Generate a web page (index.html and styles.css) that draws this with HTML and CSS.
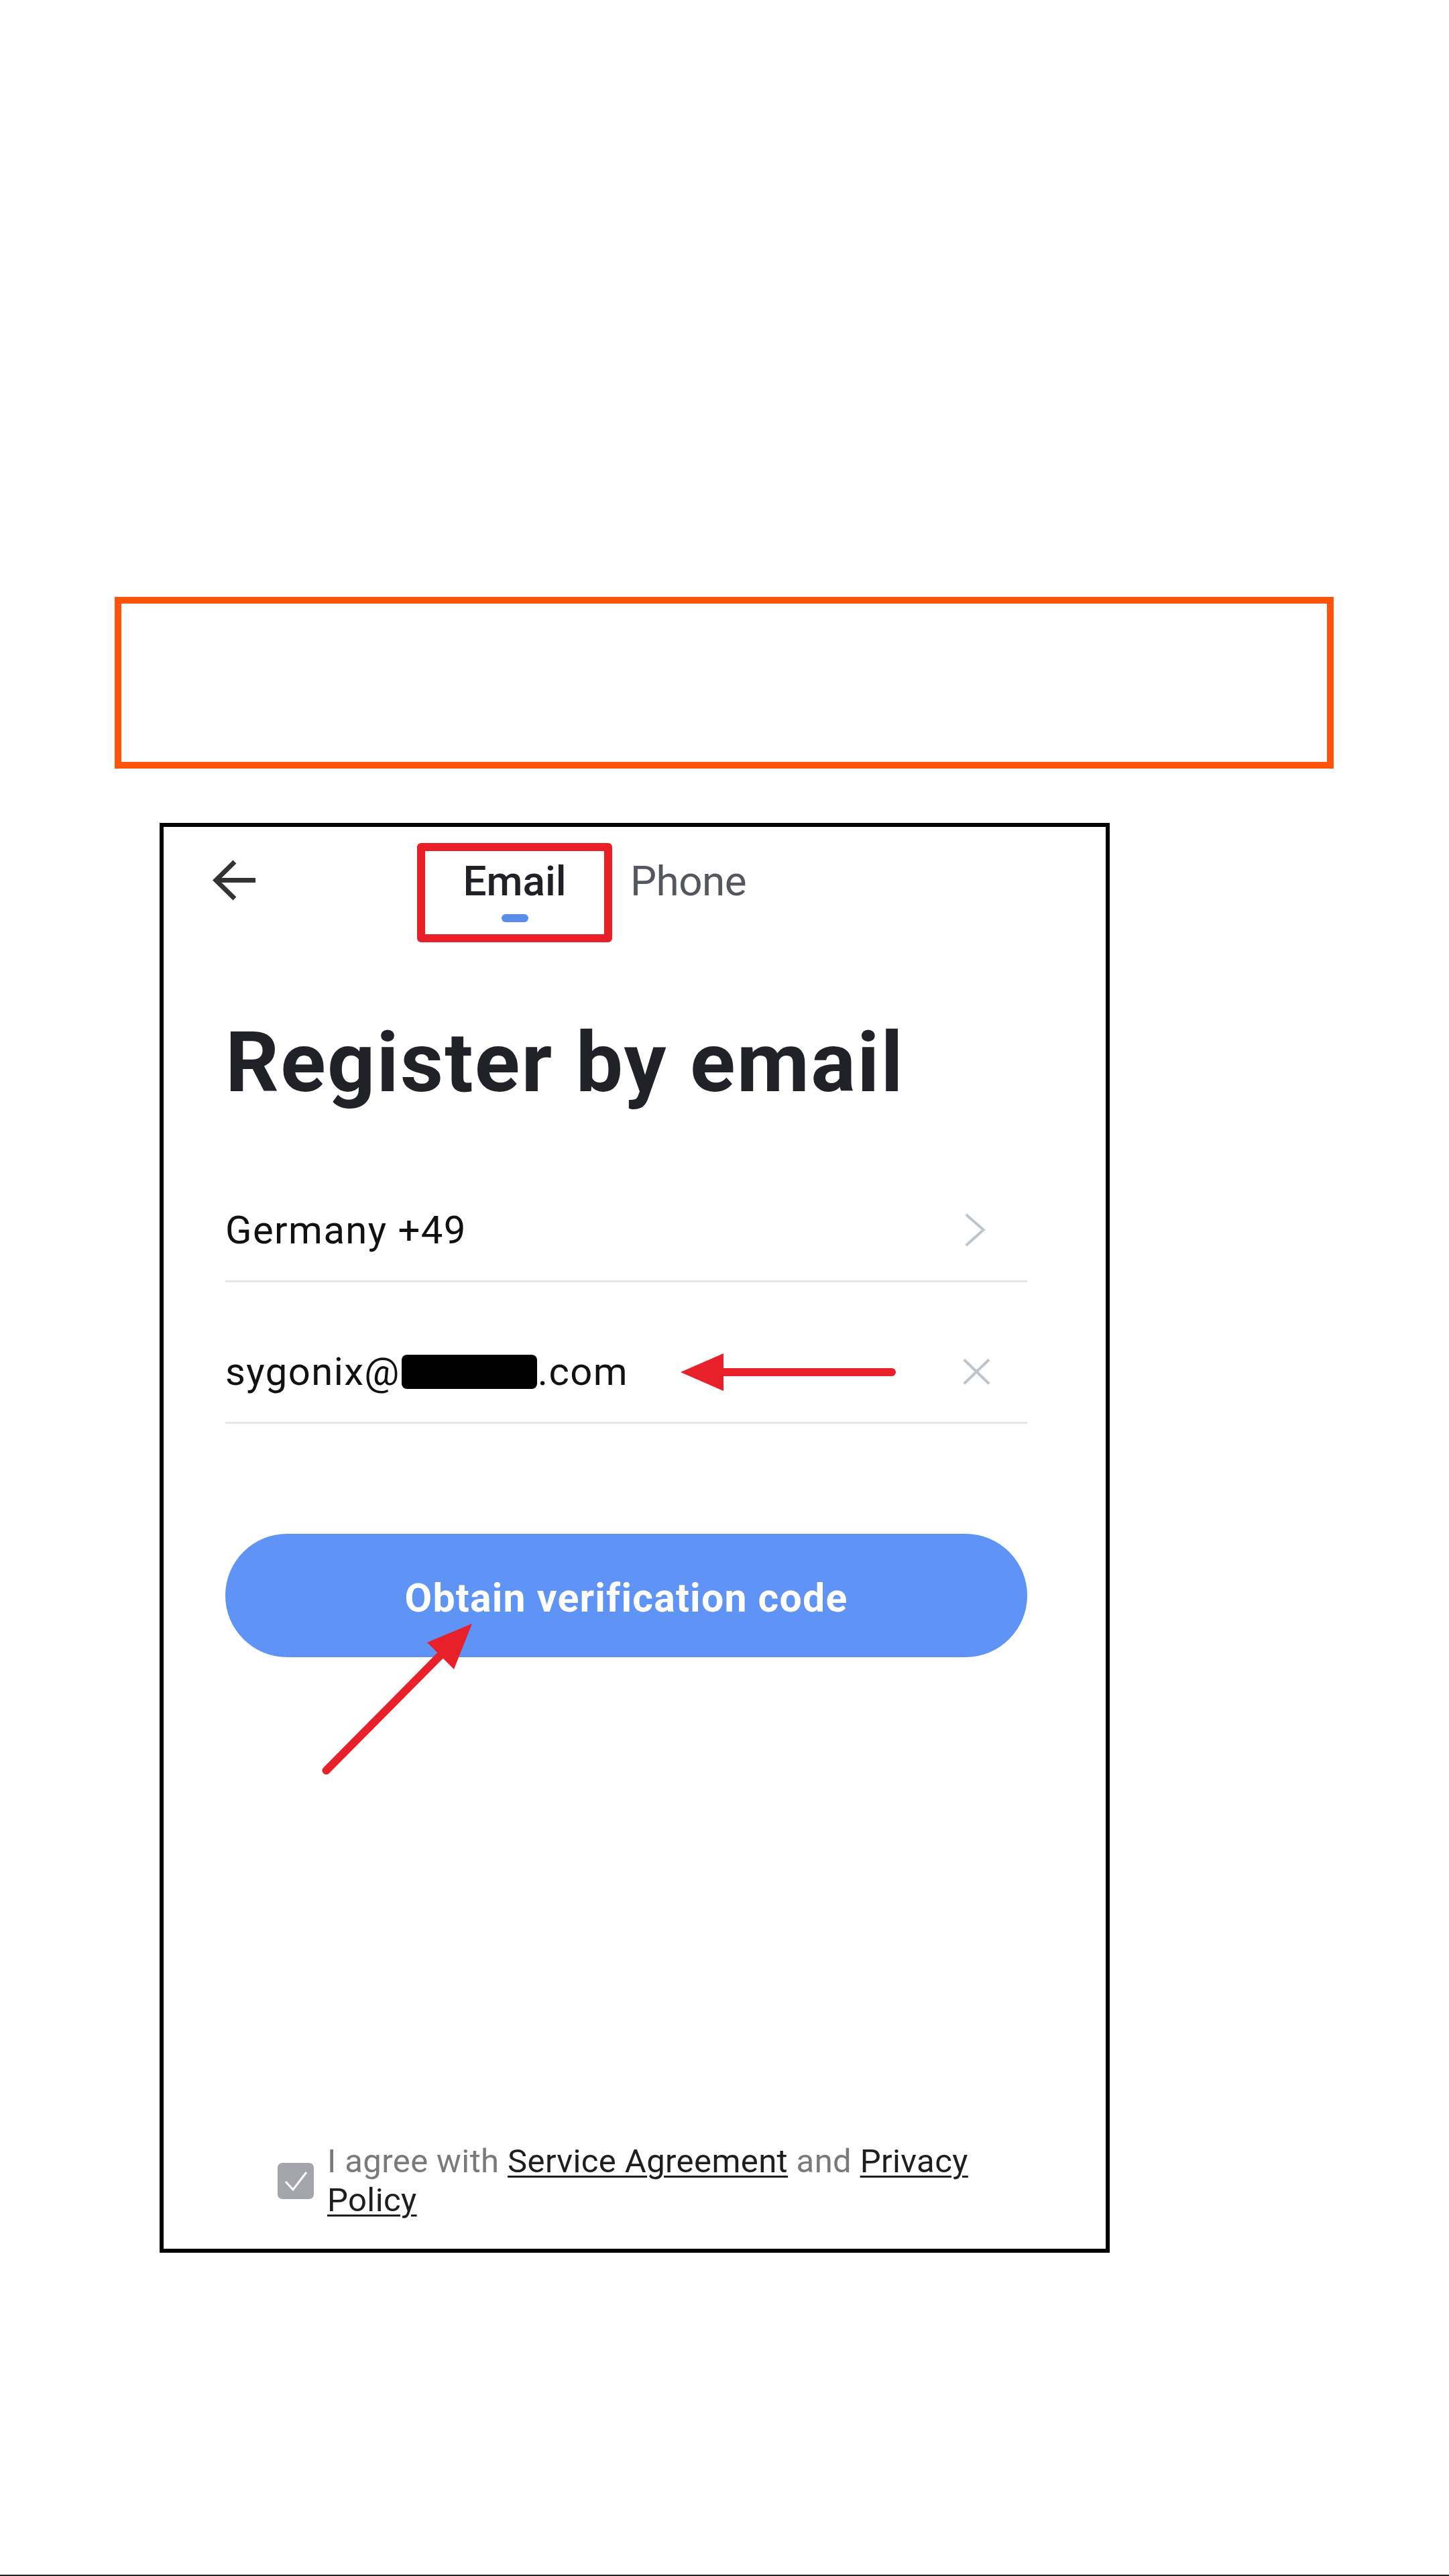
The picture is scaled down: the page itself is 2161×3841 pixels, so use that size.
FILE: index.html
```html
<!DOCTYPE html>
<html lang="en">
<head>
<meta charset="utf-8">
<title>Register by email</title>
<link rel="stylesheet" href="styles.css">
</head>
<body>
<div class="page">
  <div class="callout"></div>
  <div class="phone">
    <div class="header">
      <svg class="back" viewBox="0 0 68 66" width="68" height="66">
        <path d="M34 5 L6 32.5 L34 60 M6 32.5 H65" fill="none" stroke="#333333" stroke-width="7" stroke-linejoin="miter"/>
      </svg>
      <div class="tab-mark">
        <div class="tab tab-active">Email</div>
        <div class="tab-indicator"></div>
      </div>
      <div class="tab tab-other">Phone</div>
    </div>
    <h1 class="title">Register by email</h1>
    <div class="field field-first">
      <span class="field-text">Germany +49</span>
      <svg class="chevron" viewBox="0 0 32 52" width="32" height="52">
        <path d="M2.7 3 L28.7 25.7 L2.7 49" fill="none" stroke="#C0C5CB" stroke-width="4"/>
      </svg>
    </div>
    <div class="field">
      <span class="field-text">sygonix@<span class="redact"></span>.com</span>
      <svg class="clear" viewBox="0 0 43 43" width="43" height="43">
        <path d="M2.7 3.3 L40 39.3 M40 3.3 L2.7 39.3" fill="none" stroke="#C0C5CB" stroke-width="4"/>
      </svg>
    </div>
    <div class="cta">Obtain verification code</div>
    <div class="agree">
      <span class="checkbox">
        <svg viewBox="0 0 54 54" width="54" height="54">
          <path d="M12 28 L23 40 L43 14" fill="none" stroke="#ffffff" stroke-width="3"/>
        </svg>
      </span>
      <p class="agree-text">I agree with <a class="link">Service Agreement</a> and <a class="link">Privacy</a> <a class="link">Policy</a></p>
    </div>
    <svg class="anno anno-left" viewBox="0 0 330 64" width="330" height="64">
      <path d="M60 32 H320" stroke="#E8202A" stroke-width="12" stroke-linecap="round"/>
      <polygon points="5,32 69,4 69,60" fill="#E8202A"/>
    </svg>
    <svg class="anno anno-diag" viewBox="0 0 240 240" width="240" height="240">
      <path d="M11.5 230 L185 55" stroke="#E8202A" stroke-width="12" stroke-linecap="round"/>
      <polygon points="229,11 162,39 202,79" fill="#E8202A"/>
    </svg>
  </div>
  <div class="bottom-rule"></div>
</div>
</body>
</html>
```

FILE: styles.css
```css
* { box-sizing: border-box; }
html, body { margin: 0; padding: 0; background: #ffffff; }
body { font-family: Roboto, "Noto Sans", "Liberation Sans", sans-serif; }

.page {
  width: 2161px;
  height: 3841px;
  display: flex;
  flex-direction: column;
  padding-top: 890px;
  overflow: hidden;
}

.callout {
  flex: none;
  margin-left: 171px;
  width: 1818px;
  height: 256px;
  border: 10px solid #FF520A;
}

.phone {
  flex: none;
  position: relative;
  margin-left: 238px;
  margin-top: 81px;
  width: 1417px;
  height: 2132px;
  border: 6px solid #000000;
  display: flex;
  flex-direction: column;
  padding: 24px 0 43px 0;
  background: #ffffff;
}

.header {
  display: flex;
  align-items: flex-start;
  height: 148px;
}

.back {
  flex: none;
  margin-left: 72px;
  margin-top: 23px;
}

.tab-mark {
  flex: none;
  margin-left: 238px;
  width: 291px;
  height: 148px;
  border: 12px solid #E91E27;
  border-radius: 6px;
  display: flex;
  flex-direction: column;
  align-items: center;
  padding-top: 14px;
}

.tab {
  font-size: 62px;
  line-height: 62px;
  white-space: nowrap;
}

.tab-active {
  font-weight: 500;
  color: #1F2127;
}

.tab-indicator {
  width: 40px;
  height: 12px;
  border-radius: 6px;
  background: #5B8DEF;
  margin-top: 18px;
}

.tab-other {
  margin-left: 27px;
  margin-top: 26px;
  color: #54585E;
  letter-spacing: -0.5px;
}

.title {
  margin: 117px 117px 0 92px;
  font-size: 125px;
  line-height: 125px;
  font-weight: 700;
  color: #202228;
  white-space: nowrap;
  letter-spacing: 2.2px;
}

.field {
  margin: 0 117px 0 92px;
  display: flex;
  align-items: center;
  padding-top: 104px;
  padding-bottom: 46px;
  border-bottom: 3px solid #E6E6E6;
}

.field-first {
  margin-top: 54px;
}

.field-text {
  flex: 1;
  font-size: 58px;
  line-height: 58px;
  color: #111111;
  white-space: nowrap;
  letter-spacing: 1.4px;
}

.redact {
  display: inline-block;
  width: 202px;
  height: 51px;
  background: #000000;
  border-radius: 8px;
  vertical-align: -6px;
  margin: 0 1px 0 2px;
}

.chevron {
  flex: none;
  margin-right: 62px;
}

.clear {
  flex: none;
  margin-right: 54px;
}

.cta {
  margin: 164px 117px 0 92px;
  height: 184px;
  border-radius: 92px;
  background: #5F93F5;
  color: #ffffff;
  font-size: 59px;
  line-height: 59px;
  font-weight: 700;
  display: flex;
  align-items: center;
  justify-content: center;
  padding-top: 6px;
  letter-spacing: 1.2px;
}

.agree {
  margin-top: auto;
  margin-left: 170px;
  display: flex;
  align-items: center;
}

.checkbox {
  flex: none;
  width: 54px;
  height: 54px;
  border-radius: 7px;
  background: #A4A4AC;
  display: flex;
}

.agree-text {
  margin: 0 0 0 20px;
  width: 1040px;
  font-size: 49px;
  line-height: 58px;
  color: #7A7A7A;
  letter-spacing: 0.4px;
}

.link {
  color: #1E1E1E;
  text-decoration: underline;
  text-decoration-thickness: 3px;
  text-underline-offset: 5px;
}

.anno {
  position: absolute;
}

.anno-left {
  left: 766px;
  top: 781px;
}

.anno-diag {
  left: 231px;
  top: 1177px;
}

.bottom-rule {
  flex: none;
  margin-top: auto;
  height: 2px;
  background: #222222;
}
```
